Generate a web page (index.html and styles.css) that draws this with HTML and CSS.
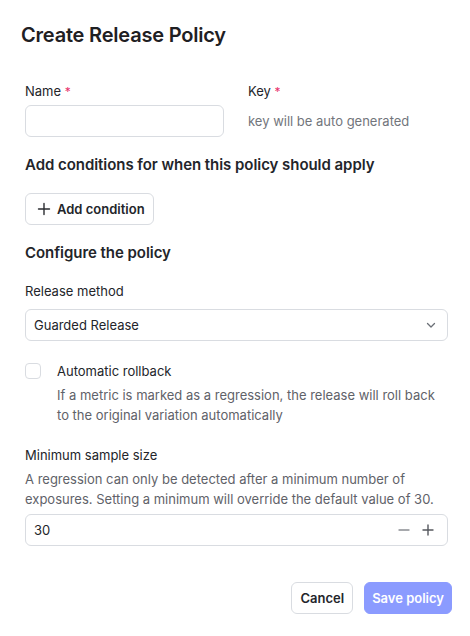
FILE: index.html
```html
<!DOCTYPE html>
<html lang="en">
<head>
<meta charset="utf-8">
<title>Create Release Policy</title>
<link rel="stylesheet" href="styles.css">
</head>
<body>
<div class="modal">
  <h1 class="title">Create Release Policy</h1>
  <div class="body">
    <div class="row-two">
      <div class="field">
        <label class="label">Name <span class="req">*</span></label>
        <div class="input"></div>
      </div>
      <div class="field">
        <label class="label">Key <span class="req">*</span></label>
        <div class="key-hint">key will be auto generated</div>
      </div>
    </div>

    <h2 class="heading h-cond">Add conditions for when this policy should apply</h2>
    <div class="cond-row">
      <button class="btn btn-add">
        <svg class="plus" width="14" height="14" viewBox="0 0 14 14" fill="none" stroke="#2b2d31" stroke-width="1.4" stroke-linecap="round"><path d="M7 1.5v11M1.5 7h11"/></svg>
        Add condition
      </button>
    </div>

    <h2 class="heading h-conf">Configure the policy</h2>
    <div class="field f-method">
      <label class="label">Release method</label>
      <div class="select">
        <span>Guarded Release</span>
        <svg width="12" height="12" viewBox="0 0 12 12" fill="none" stroke="#6b6f76" stroke-width="1.3" stroke-linecap="round" stroke-linejoin="round"><path d="M2.5 4.5 6 8l3.5-3.5"/></svg>
      </div>
    </div>

    <div class="check-row">
      <span class="checkbox"></span>
      <div class="check-text">
        <div class="check-label">Automatic rollback</div>
        <div class="desc">If a metric is marked as a regression, the release will roll back to the original variation automatically</div>
      </div>
    </div>

    <div class="field f-sample">
      <label class="label">Minimum sample size</label>
      <div class="desc">A regression can only be detected after a minimum number of exposures. Setting a minimum will override the default value of 30.</div>
      <div class="number">
        <span>30</span>
        <div class="steppers">
          <svg width="14" height="14" viewBox="0 0 14 14" fill="none" stroke="#8a8d93" stroke-width="1.4" stroke-linecap="round"><path d="M2 7h10"/></svg>
          <svg width="14" height="14" viewBox="0 0 14 14" fill="none" stroke="#55585e" stroke-width="1.4" stroke-linecap="round"><path d="M7 2v10M2 7h10"/></svg>
        </div>
      </div>
    </div>
  </div>
  <div class="footer">
    <button class="btn btn-cancel">Cancel</button>
    <button class="btn btn-save">Save policy</button>
  </div>
</div>
</body>
</html>
```

FILE: styles.css
```css
* { box-sizing: border-box; }
html, body { margin: 0; padding: 0; background: #fff; }
body {
  font-family: Inter, "Noto Sans", sans-serif;
  color: #23252a;
  font-size: 13px;
  line-height: 20px;
}
.modal { width: 470px; padding-top: 21px; }
.title {
  margin: 0;
  padding-left: 21px;
  font-size: 20px;
  line-height: 28px;
  font-weight: 600;
  letter-spacing: -0.2px;
  color: #1f2023;
}
.body { padding: 32px 22px 0 25px; }
.row-two { display: flex; gap: 24px; }
.row-two .field { width: 199px; }
.field { display: flex; flex-direction: column; }
.label { font-weight: 400; color: #23252a; height: 20px; }
.req { color: #e8306a; font-size: 12px; line-height: 0; }
.input {
  margin-top: 4px;
  height: 32px;
  border: 1px solid #d9dce1;
  border-radius: 6px;
}
.key-hint {
  margin-top: 4px;
  height: 32px;
  display: flex;
  align-items: center;
  color: #72757c;
}
.heading {
  margin: 0;
  font-size: 15px;
  line-height: 24px;
  font-weight: 600;
  letter-spacing: -0.05px;
  color: #23252a;
}
.h-cond { margin-top: 16px; }
.cond-row { margin-top: 16px; display: flex; }
.btn {
  font-family: inherit;
  font-size: 13px;
  font-weight: 600;
  height: 32px;
  border-radius: 6px;
  cursor: pointer;
}
.btn-add {
  display: flex;
  align-items: center;
  gap: 6px;
  padding: 0 8px 0 11px;
  background: #fff;
  border: 1px solid #d9dce1;
  color: #23252a;
}
.h-conf { margin-top: 16px; }
.f-method { margin-top: 16px; }
.select {
  margin-top: 8px;
  height: 32px;
  border: 1px solid #d9dce1;
  border-radius: 6px;
  display: flex;
  align-items: center;
  justify-content: space-between;
  padding: 0 10px 0 8px;
}
.check-row { margin-top: 20px; display: flex; gap: 16px; }
.checkbox {
  width: 16px;
  height: 16px;
  margin-top: 2px;
  border: 1px solid #d9dce1;
  border-radius: 4px;
  flex: none;
}
.check-label { color: #23252a; }
.desc { color: #5f6269; margin-top: 4px; }
.f-sample { margin-top: 20px; }
.number {
  margin-top: 5px;
  height: 32px;
  border: 1px solid #d9dce1;
  border-radius: 6px;
  display: flex;
  align-items: center;
  justify-content: space-between;
  padding: 0 12px 0 8px;
}
.steppers { display: flex; gap: 10px; align-items: center; }
.steppers svg { display: block; }
.footer {
  display: flex;
  justify-content: flex-end;
  gap: 11px;
  padding: 36px 18px 0 0;
}
.btn-cancel {
  background: #fff;
  border: 1px solid #d9dce1;
  color: #23252a;
  padding: 0 8px;
}
.btn-save {
  background: #8b9bff;
  border: 1px solid #8b9bff;
  color: #fff;
  padding: 0 7px;
}
```
